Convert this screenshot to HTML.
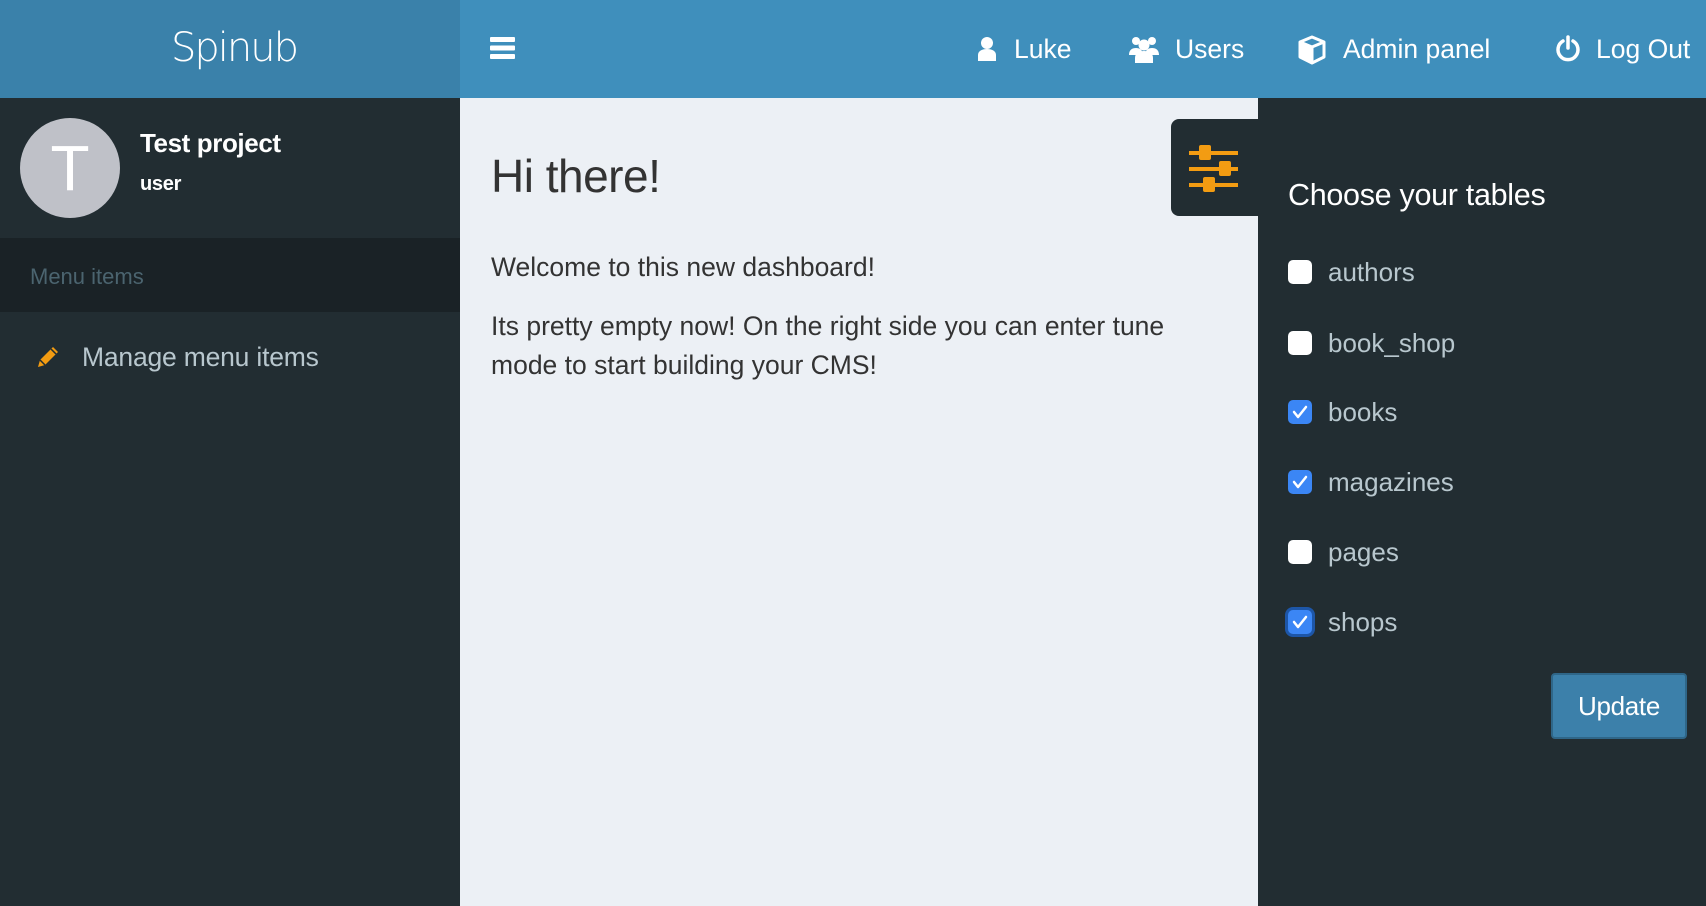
<!DOCTYPE html>
<html><head><meta charset="utf-8"><style>
*{margin:0;padding:0;box-sizing:border-box}
body{width:1706px;height:906px;overflow:hidden;background:#ecf0f5;font-family:"Liberation Sans",sans-serif;position:relative}
.a{position:absolute;white-space:nowrap}
.hl{left:0;top:0;width:460px;height:98px;background:#3a81aa}
.hr{left:460px;top:0;width:1246px;height:98px;background:#3f8fbc}
.side{left:0;top:98px;width:460px;height:808px;background:#222d32}
.rp{left:1258px;top:98px;width:448px;height:808px;background:#222d32}
.nav{color:#fff;font-size:26.5px;top:34px;letter-spacing:0}
.cb{left:1288px;width:24px;height:24px;border-radius:5px;background:#fff}
.cb.on{background:#3b86f5}
.lbl{left:1328px;color:#b8c7ce;font-size:26px;letter-spacing:0}
</style></head><body>
<div class="a hl"></div><div class="a hr"></div>
<div class="a" style="left:171px;top:25px;color:#fff;font-size:40px;letter-spacing:-2px;font-family:'DejaVu Sans','Liberation Sans',sans-serif;font-weight:200">Spinub</div>
<svg class="a" style="left:490px;top:37px" width="25" height="22"><rect y="0" width="25" height="5" rx="1" fill="#fff"/><rect y="8.5" width="25" height="5" rx="1" fill="#fff"/><rect y="17" width="25" height="5" rx="1" fill="#fff"/></svg>
<svg class="a" style="left:977px;top:36px" width="20" height="26"><circle cx="10" cy="7" r="6" fill="#fff"/><path d="M1 25v-6c0-4 4-6 9-6s9 2 9 6v6z" fill="#fff"/></svg>
<div class="a nav" style="left:1014px">Luke</div>
<svg class="a" style="left:1128px;top:35px" width="32" height="28"><circle cx="8" cy="6" r="4" fill="#fff"/><circle cx="24" cy="6" r="4" fill="#fff"/><circle cx="16" cy="10" r="5.5" fill="#fff"/><path d="M1 20c0-5 3-7 7-7s6 2 6 4v3z M31 20c0-5-3-7-7-7s-6 2-6 4v3z" fill="#fff"/><path d="M7 28v-5c0-5 4-7 9-7s9 2 9 7v5z" fill="#fff"/></svg>
<div class="a nav" style="left:1175px">Users</div>
<svg class="a" style="left:1298px;top:35px" width="28" height="30"><path d="M14 2L26 7v15L14 28 2 22V7z" fill="none" stroke="#fff" stroke-width="3" stroke-linejoin="round"/><path d="M2 7l12 5 12-5M14 12v16" fill="none" stroke="#fff" stroke-width="3"/><path d="M14 12v16L2 22V7z" fill="#fff"/></svg>
<div class="a nav" style="left:1343px">Admin panel</div>
<svg class="a" style="left:1555px;top:35px" width="26" height="28"><path d="M8 6a10 10 0 1 0 10 0" fill="none" stroke="#fff" stroke-width="3.5" stroke-linecap="round"/><path d="M13 2v11" stroke="#fff" stroke-width="3.5" stroke-linecap="round"/></svg>
<div class="a nav" style="left:1596px">Log Out</div>

<div class="a side"></div>
<div class="a" style="left:20px;top:118px;width:100px;height:100px;border-radius:50%;background:#bfc1c8"></div>
<div class="a" style="left:20px;top:130px;width:100px;text-align:center;color:#fff;font-size:64px;line-height:76px;font-weight:300">T</div>
<div class="a" style="left:140px;top:128px;color:#fff;font-size:26px;font-weight:bold;letter-spacing:-0.4px">Test project</div>
<div class="a" style="left:140px;top:173px;color:#fff;font-size:20px;font-weight:bold;letter-spacing:-0.3px">user</div>
<div class="a" style="left:0;top:238px;width:460px;height:74px;background:#1a2226"></div>
<div class="a" style="left:30px;top:264px;color:#4b646f;font-size:22px;letter-spacing:0">Menu items</div>
<svg class="a" style="left:35px;top:344px" width="26" height="26"><path d="M3 23l2-7L18 3l5 5L10 21z" fill="#f39c12"/><path d="M5 16l5 5" stroke="#222d32" stroke-width="1.5"/><path d="M16 5l5 5" stroke="#222d32" stroke-width="1.5"/></svg>
<div class="a" style="left:82px;top:342px;color:#b8c7ce;font-size:26.5px;letter-spacing:-0.2px">Manage menu items</div>

<div class="a" style="left:491px;top:149px;color:#333;font-size:46px;letter-spacing:-0.5px">Hi there!</div>
<div class="a" style="left:491px;top:252px;color:#333;font-size:26.5px;letter-spacing:0">Welcome to this new dashboard!</div>
<div class="a" style="left:491px;top:307px;color:#333;font-size:26.5px;line-height:39px;letter-spacing:0">Its pretty empty now! On the right side you can enter tune<br>mode to start building your CMS!</div>

<div class="a rp"></div>
<div class="a" style="left:1171px;top:119px;width:90px;height:97px;background:#222d32;border-radius:8px 0 0 8px"></div>
<svg class="a" style="left:1189px;top:144px" width="50" height="48"><g fill="#f39c12"><rect x="0" y="7" width="49" height="4"/><rect x="0" y="23" width="49" height="4"/><rect x="0" y="39" width="49" height="4"/><rect x="10" y="1" width="12" height="15" rx="2"/><rect x="30" y="17" width="12" height="15" rx="2"/><rect x="14" y="33" width="12" height="15" rx="2"/></g></svg>
<div class="a" style="left:1288px;top:178px;color:#fff;font-size:30.5px;letter-spacing:-0.3px">Choose your tables</div>

<div class="a cb" style="top:260px"></div><div class="a lbl" style="top:257px">authors</div>
<div class="a cb" style="top:331px"></div><div class="a lbl" style="top:328px">book_shop</div>
<div class="a cb on" style="top:400px"></div><div class="a lbl" style="top:397px">books</div>
<div class="a cb on" style="top:470px"></div><div class="a lbl" style="top:467px">magazines</div>
<div class="a cb" style="top:540px"></div><div class="a lbl" style="top:537px">pages</div>
<div class="a cb on" style="top:610px;box-shadow:0 0 0 3px #1d56a8"></div><div class="a lbl" style="top:607px">shops</div>
<svg class="a" style="left:1288px;top:400px" width="24" height="240"><g fill="none" stroke="#fff" stroke-width="2.5" stroke-linecap="round" stroke-linejoin="round"><path d="M6 12l4 5 8-10"/><path d="M6 82l4 5 8-10"/><path d="M6 222l4 5 8-10"/></g></svg>

<div class="a" style="left:1551px;top:673px;width:136px;height:66px;background:#3c80aa;border:2px solid #2f6688;border-radius:4px;color:#fff;font-size:26px;text-align:center;line-height:62px;letter-spacing:-0.3px">Update</div>
</body></html>
